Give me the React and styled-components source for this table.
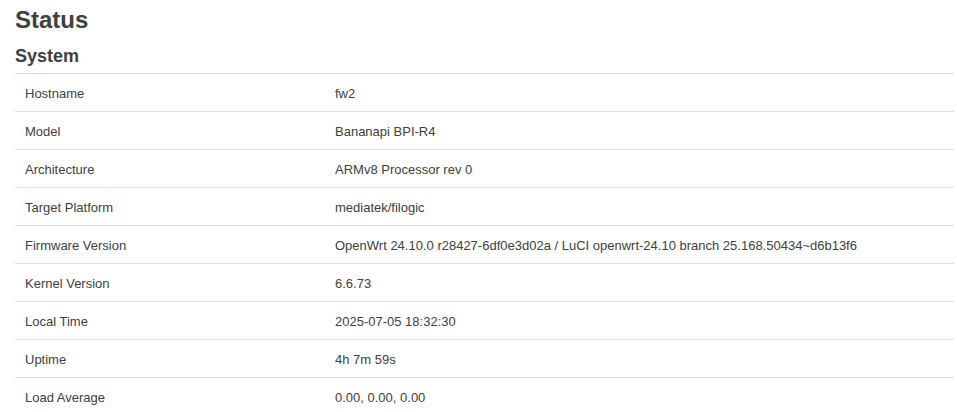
import React from "react";
import styled, { createGlobalStyle } from "styled-components";

const Global = createGlobalStyle`
  body {
    margin: 0;
    background: #fff;
    font-family: "Liberation Sans", Arial, sans-serif;
    color: #404040;
  }
`;

const Page = styled.div`
  padding: 0 3px 0 15px;
`;

const Title = styled.h2`
  font-size: 24px;
  font-weight: bold;
  margin: 0;
  padding-top: 6px;
  line-height: 28px;
`;

const Section = styled.h3`
  font-size: 18px;
  font-weight: bold;
  margin: 0;
  padding-top: 9px;
  line-height: 26px;
  padding-bottom: 4px;
`;

const Table = styled.div`
  display: grid;
  grid-template-columns: 310px 1fr;
`;

const Cell = styled.div`
  box-sizing: border-box;
  border-top: 1px solid #ddd;
  height: 38px;
  display: flex;
  align-items: center;
  padding: 2px 10px 0;
  font-size: 13px;
  line-height: 16px;
`;

const rows = [
  ["Hostname", "fw2"],
  ["Model", "Bananapi BPI-R4"],
  ["Architecture", "ARMv8 Processor rev 0"],
  ["Target Platform", "mediatek/filogic"],
  ["Firmware Version", "OpenWrt 24.10.0 r28427-6df0e3d02a / LuCI openwrt-24.10 branch 25.168.50434~d6b13f6"],
  ["Kernel Version", "6.6.73"],
  ["Local Time", "2025-07-05 18:32:30"],
  ["Uptime", "4h 7m 59s"],
  ["Load Average", "0.00, 0.00, 0.00"],
];

export default function App() {
  return (
    <Page>
      <Global />
      <Title>Status</Title>
      <Section>System</Section>
      <Table>
        {rows.map(([k, v]) => (
          <React.Fragment key={k}>
            <Cell>{k}</Cell>
            <Cell>{v}</Cell>
          </React.Fragment>
        ))}
      </Table>
    </Page>
  );
}
